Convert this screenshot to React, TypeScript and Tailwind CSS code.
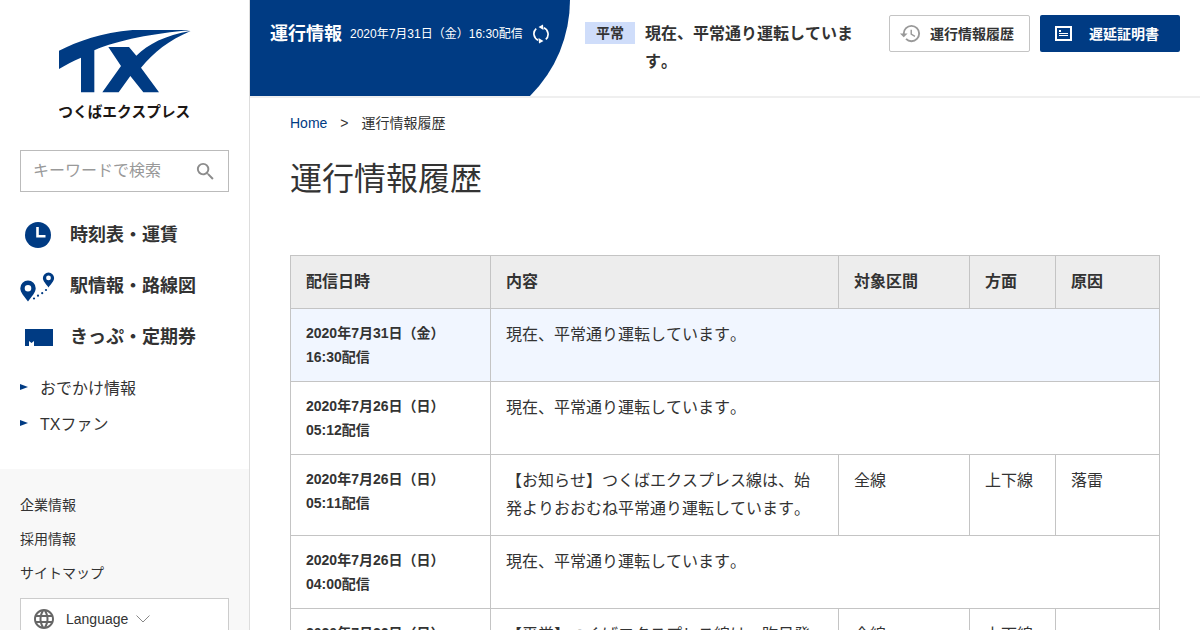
import { MdHistory, MdLanguage, MdSearch } from "react-icons/md";

const mainNav = [
  { label: "時刻表・運賃", icon: <ClockIcon /> },
  { label: "駅情報・路線図", icon: <RouteIcon /> },
  { label: "きっぷ・定期券", icon: <TicketIcon /> },
];

const subNav = ["おでかけ情報", "TXファン"];
const corporateNav = ["企業情報", "採用情報", "サイトマップ"];

type Entry = {
  date: string;
  time: string;
  body: string;
  section?: string;
  direction?: string;
  cause?: string;
};

const entries: Entry[] = [
  { date: "2020年7月31日（金）", time: "16:30配信", body: "現在、平常通り運転しています。" },
  { date: "2020年7月26日（日）", time: "05:12配信", body: "現在、平常通り運転しています。" },
  {
    date: "2020年7月26日（日）",
    time: "05:11配信",
    body: "【お知らせ】つくばエクスプレス線は、始発よりおおむね平常通り運転しています。",
    section: "全線",
    direction: "上下線",
    cause: "落雷",
  },
  { date: "2020年7月26日（日）", time: "04:00配信", body: "現在、平常通り運転しています。" },
  {
    date: "2020年7月26日（日）",
    time: "00:30配信",
    body: "【平常】つくばエクスプレス線は、昨日発生した落雷の影響による遅れは解消しました。",
    section: "全線",
    direction: "上下線",
    cause: "",
  },
];

function Logo() {
  return (
    <svg viewBox="27 30 396 276" className="h-[92px] w-[132px]" role="img" aria-label="つくばエクスプレス">
      <path
        fill="#003b83"
        d="M27 92C115 48 230 14 422 31C310 40 205 60 133 91V217H93V113C70 122 48 134 27 147Z"
      />
      <path
        fill="#003b83"
        d="M175 81H237L259 107C295 72 345 46 422 33C355 62 312 96 273 143L327 217H280L241 168L206 217H157L213 138Z"
      />
      <text
        x="25"
        y="292"
        fontSize="44"
        fontWeight="700"
        fill="#1c1715"
        fontFamily="'Noto Sans CJK JP', sans-serif"
      >
        つくばエクスプレス
      </text>
    </svg>
  );
}

function ClockIcon() {
  return (
    <svg viewBox="0 0 26 26" className="ml-[5px] size-[26px]" aria-hidden="true">
      <circle cx="13" cy="13" r="13" fill="#003b83" />
      <path d="M12.500 5V14.200H20.500" fill="none" stroke="#fff" strokeWidth="2.600" />
    </svg>
  );
}

function RouteIcon() {
  return (
    <svg viewBox="0 0 35 30" className="mt-0.5 h-[30px] w-[35px]" aria-hidden="true">
      <path
        fill="#003b83"
        fillRule="evenodd"
        d="M8 8.500a7.700 7.700 0 0 1 7.700 7.700C15.700 20.500 11.500 24.500 8 29.500C4.500 24.500.3 20.500.3 16.200A7.700 7.700 0 0 1 8 8.500ZM8 13a3.300 3.300 0 1 0 0 6.600A3.300 3.300 0 0 0 8 13Z"
      />
      <path
        fill="#003b83"
        fillRule="evenodd"
        d="M28.500 .5a5.600 5.600 0 0 1 5.600 5.600C34.100 9.300 31 12 28.500 15.500C26 12 22.900 9.300 22.900 6.100A5.600 5.600 0 0 1 28.500 .5ZM28.500 3.500a2.400 2.400 0 1 0 0 4.800A2.400 2.400 0 0 0 28.500 3.500Z"
      />
      <g fill="#003b83">
        <circle cx="14" cy="26.500" r="1.100" />
        <circle cx="18" cy="23.700" r="1.100" />
        <circle cx="22.200" cy="21.200" r="1.100" />
        <circle cx="26" cy="18" r="1.100" />
      </g>
    </svg>
  );
}

function TicketIcon() {
  return (
    <svg viewBox="0 0 28 17" className="mt-px ml-[5px] h-[17px] w-7" aria-hidden="true">
      <path fill="#003b83" d="M0 0H28V17H9V12L6.500 14L4 12V17H0Z" />
    </svg>
  );
}

function ReloadIcon() {
  return (
    <svg viewBox="0 0 16 20" className="h-5 w-4" aria-hidden="true">
      <g fill="none" stroke="#fff" strokeWidth="1.700">
        <path d="M3.200 4.600A7 7 0 0 0 5.200 16.200" />
        <path d="M12.800 15.400A7 7 0 0 0 10.800 3.800" />
      </g>
      <path fill="#fff" d="M5.500 3L10 .5L10.500 6ZM10.500 17L6 19.500L5.500 14Z" />
    </svg>
  );
}

function CertificateIcon() {
  return (
    <svg viewBox="0 0 17 15" className="h-[15px] w-[17px]" aria-hidden="true">
      <rect x="1" y="1" width="15" height="13" fill="none" stroke="#fff" strokeWidth="2" />
      <path d="M4 4H6V6H4ZM4 7H13V8H4ZM4 9H13V10H4Z" fill="#fff" />
    </svg>
  );
}

function Sidebar() {
  return (
    <aside className="flex w-[250px] shrink-0 flex-col border-r border-[#ddd] bg-white">
      <a href="#" className="mt-[30px] flex justify-center">
        <Logo />
      </a>
      <form className="mx-5 mt-7 flex h-[42px] items-center border border-[#bbb] pr-[11px] pl-3">
        <input
          type="text"
          aria-label="キーワードで検索"
          placeholder="キーワードで検索"
          className="min-w-0 flex-1 outline-none placeholder:text-[#999]"
        />
        <button type="submit" aria-label="検索" className="text-[#8c8c8c]">
          <MdSearch size={23} />
        </button>
      </form>
      <nav className="mt-[17px] px-5">
        <ul>
          {mainNav.map((item) => (
            <li key={item.label}>
              <a href="#" className="flex h-[51px] items-center text-lg font-bold">
                <span className="w-[50px] shrink-0">{item.icon}</span>
                {item.label}
              </a>
            </li>
          ))}
        </ul>
        <ul className="mt-[9px]">
          {subNav.map((label) => (
            <li key={label}>
              <a href="#" className="flex h-9 items-center">
                <svg viewBox="0 0 8 6" className="mr-3 mb-1 h-1.5 w-2" aria-hidden="true">
                  <path d="M0 0L8 3L0 6Z" fill="#003b83" />
                </svg>
                {label}
              </a>
            </li>
          ))}
        </ul>
      </nav>
      <div className="mt-[26px] flex-1 bg-[#f8f8f8] px-5 pt-[19px] pb-5">
        <ul className="text-sm">
          {corporateNav.map((label) => (
            <li key={label}>
              <a href="#" className="flex h-[34px] items-center">
                {label}
              </a>
            </li>
          ))}
        </ul>
        <button type="button" className="mt-2 flex h-[42px] w-full items-center border border-[#ccc] bg-white px-[11px] text-sm">
          <MdLanguage size={24} className="mr-[10px] text-[#666]" />
          Language
          <svg viewBox="0 0 14 8" className="ml-2 h-2 w-3.5" aria-hidden="true">
            <path d="M.5 .5L7 7L13.500 .5" fill="none" stroke="#888" />
          </svg>
        </button>
      </div>
    </aside>
  );
}

function StatusBar() {
  return (
    <header className="flex min-h-24 items-stretch shadow-[0_2px_0_#efefef]">
      <div className="relative w-80 shrink-0 overflow-hidden">
        <div className="absolute inset-x-0 top-0 h-[135px] rounded-br-[135px] bg-[#003b83]" />
        <div className="relative flex items-center pt-5 pl-5 text-white">
          <p className="text-lg leading-7 font-bold">運行情報</p>
          <p className="ml-2 text-xs leading-7">2020年7月31日（金）16:30配信</p>
          <button type="button" aria-label="更新" className="ml-[10px]">
            <ReloadIcon />
          </button>
        </div>
      </div>
      <div className="flex min-w-0 flex-1 items-start pt-5 pl-[15px] font-bold">
        <span className="mt-[2px] mr-[10px] w-[50px] shrink-0 bg-[#cfddfa] text-center text-sm leading-[22px]">平常</span>
        <p className="min-w-0 flex-1 leading-7">現在、平常通り運転しています。</p>
      </div>
      <div className="ml-5 flex shrink-0 items-start gap-[10px] pt-[15px] pr-5 text-sm font-bold">
        <a href="#" className="flex h-[37px] w-[141px] items-center rounded-xs border border-[#c4c4c4] pl-[9px]">
          <MdHistory size={23} className="mr-2 text-[#999]" />
          運行情報履歴
        </a>
        <a href="#" className="flex h-[37px] w-[140px] items-center rounded-xs bg-[#003b83] pl-[15px] text-white">
          <span className="mr-[17px]">
            <CertificateIcon />
          </span>
          遅延証明書
        </a>
      </div>
    </header>
  );
}

function HistoryTable() {
  const cell = "border border-[#c4c4c4] px-[15px] py-3 text-left align-top leading-7";
  return (
    <table className="mt-[52px] w-full table-fixed border-collapse">
      <colgroup>
        <col className="w-[200px]" />
        <col />
        <col className="w-[131px]" />
        <col className="w-[86px]" />
        <col className="w-[104px]" />
      </colgroup>
      <thead className="bg-[#ededed]">
        <tr>
          {["配信日時", "内容", "対象区間", "方面", "原因"].map((head) => (
            <th key={head} scope="col" className={cell}>
              {head}
            </th>
          ))}
        </tr>
      </thead>
      <tbody>
        {entries.map((entry, index) => (
          <tr key={entry.date + entry.time} className={index === 0 ? "bg-[#f1f6ff]" : "bg-white"}>
            <th scope="row" className="border border-[#c4c4c4] px-[15px] py-3 text-left align-top text-sm leading-6">
              {entry.date}
              <br />
              {entry.time}
            </th>
            {entry.section ? (
              <>
                <td className={cell}>{entry.body}</td>
                <td className={cell}>{entry.section}</td>
                <td className={cell}>{entry.direction}</td>
                <td className={cell}>{entry.cause}</td>
              </>
            ) : (
              <td colSpan={4} className={cell}>
                {entry.body}
              </td>
            )}
          </tr>
        ))}
      </tbody>
    </table>
  );
}

export default function App() {
  return (
    <div
      className="flex min-h-screen bg-white font-['Liberation_Sans','Noto_Sans_CJK_JP',sans-serif] text-[#333] [font-kerning:none]"
      lang="ja"
    >
      <Sidebar />
      <div className="min-w-0 flex-1">
        <StatusBar />
        <main className="px-10 pt-[17px] pb-10">
          <nav aria-label="パンくずリスト">
            <ol className="flex text-sm leading-5">
              <li>
                <a href="#" className="text-[#003b83]">
                  Home
                </a>
              </li>
              <li className="mx-[13px]" aria-hidden="true">
                &gt;
              </li>
              <li>運行情報履歴</li>
            </ol>
          </nav>
          <h1 className="mt-[22px] text-[32px] leading-12">運行情報履歴</h1>
          <HistoryTable />
        </main>
      </div>
    </div>
  );
}
